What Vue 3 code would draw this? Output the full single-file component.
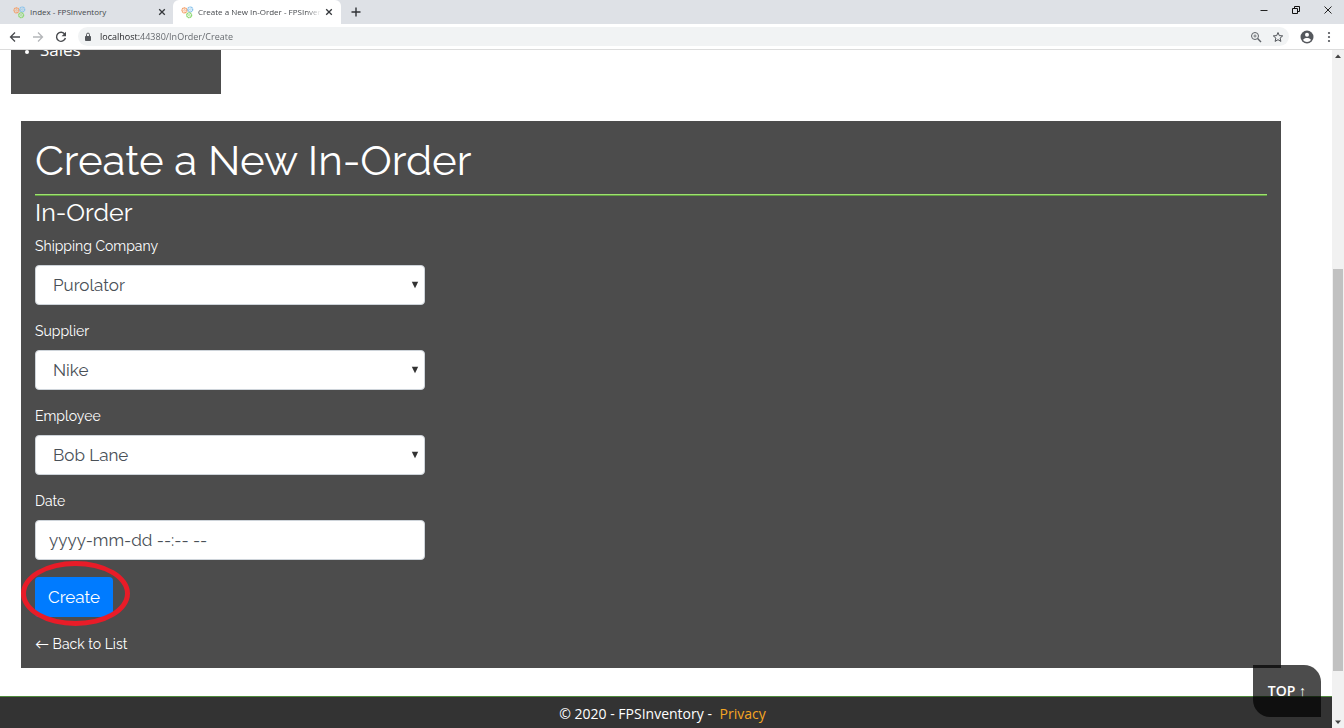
<script setup>
import { ref } from 'vue'

const tabs = ref([
  { title: 'Index - FPSInventory', active: false },
  { title: 'Create a New In-Order - FPSInventory', active: true },
])
const url = ref('localhost:44380/InOrder/Create')
const fields = ref([
  { id: 'shipping', label: 'Shipping Company', value: 'Purolator', options: ['Purolator'] },
  { id: 'supplier', label: 'Supplier', value: 'Nike', options: ['Nike'] },
  { id: 'employee', label: 'Employee', value: 'Bob Lane', options: ['Bob Lane'] },
])
const date = ref('')
</script>

<template>
  <div class="window">
    <header class="tabstrip">
      <div v-for="tab in tabs" :key="tab.title" class="tab" :class="{ active: tab.active }">
        <svg class="favicon" viewBox="0 0 24 24" fill="none" aria-hidden="true">
          <circle cx="6.500" cy="8" r="4.500" stroke="#f3a06a" stroke-width="2.600" stroke-dasharray="2.600 .6" />
          <circle cx="6.500" cy="8" r="1.500" stroke="#f3a673" stroke-width="1.300" />
          <circle cx="17" cy="6.500" r="4.500" stroke="#8cc4ec" stroke-width="2.600" stroke-dasharray="2.600 .6" />
          <circle cx="17" cy="6.500" r="1.500" stroke="#94c9ed" stroke-width="1.300" />
          <circle cx="15" cy="17" r="4.500" stroke="#8fd975" stroke-width="2.600" stroke-dasharray="2.600 .6" />
          <circle cx="15" cy="17" r="1.500" stroke="#9bdd83" stroke-width="1.300" />
        </svg>
        <button class="tab-title" type="button">{{ tab.title }}</button>
        <button class="tab-close" type="button" aria-label="Close tab">
          <svg viewBox="0 0 8 8"><path d="M1.200 1.200 6.800 6.800M6.800 1.200 1.200 6.800" stroke="#34373b" stroke-width="1.300" /></svg>
        </button>
      </div>
      <button class="new-tab" type="button" aria-label="New tab">
        <svg viewBox="0 0 10 10"><path d="M5 .5v9M.5 5h9" stroke="#303236" stroke-width="1.400" /></svg>
      </button>
      <div class="controls">
        <button type="button" aria-label="Minimize">
          <svg viewBox="0 0 10 10"><path d="M1.500 5.500h7" stroke="#222" /></svg>
        </button>
        <button type="button" aria-label="Restore">
          <svg viewBox="0 0 10 10" fill="none" stroke="#111"><path d="M1.500 3.500h5v5h-5zM3.500 3.500v-2h5v5h-2" /></svg>
        </button>
        <button type="button" aria-label="Close">
          <svg viewBox="0 0 10 10"><path d="M1.500 1.500l7 7M8.500 1.500l-7 7" stroke="#222" /></svg>
        </button>
      </div>
    </header>

    <nav class="toolbar">
      <button type="button" aria-label="Back">
        <svg viewBox="0 0 12 12" fill="none" stroke="#47494d" stroke-width="1.300"><path d="M11 6H1.500M6 1.500 1.500 6 6 10.500" /></svg>
      </button>
      <button type="button" aria-label="Forward">
        <svg viewBox="0 0 12 12" fill="none" stroke="#b4b6b9" stroke-width="1.300"><path d="M1 6h9.500M6 1.500 10.500 6 6 10.500" /></svg>
      </button>
      <button type="button" aria-label="Reload">
        <svg viewBox="0 0 12 12" fill="none" stroke="#47494d" stroke-width="1.400"><path d="M9.800 3.300A4.500 4.500 0 1 0 10.400 7" /><path d="M11 .8v4.400H6.600z" fill="#47494d" stroke="none" /></svg>
      </button>
      <div class="omnibox">
        <svg class="lock" viewBox="0 0 8 10"><path d="M1.500 4.500h5v4h-5z" fill="#55585c" stroke="#55585c" stroke-linejoin="round" /><path d="M2.500 4V2.600a1.500 1.500 0 0 1 3 0V4" fill="none" stroke="#55585c" /></svg>
        <input v-model="url" class="url" type="text" aria-label="Address" />
        <button type="button" aria-label="Zoom">
          <svg viewBox="0 0 12 12" fill="none" stroke="#5f6368"><circle cx="5" cy="5" r="3.500" /><path d="M7.600 7.600 11 11" stroke-width="1.400" /><path d="M5 3.400v3.200M3.400 5h3.200" stroke-width=".8" /></svg>
        </button>
        <button type="button" aria-label="Bookmark">
          <svg viewBox="0 0 12 12" fill="none" stroke="#505358"><path d="M6 1.500 7.300 4.600l3.400.3-2.600 2.200.8 3.300L6 8.700l-2.900 1.700.8-3.300L1.300 4.900l3.400-.3z" /></svg>
        </button>
      </div>
      <button class="profile" type="button" aria-label="Profile">
        <svg viewBox="0 0 14 14"><circle cx="7" cy="7" r="6.500" fill="#55585d" /><circle cx="7" cy="4.800" r="2" fill="#fff" /><path d="M3 10.100C3.400 8.600 5.500 8 7 8s3.600.6 4 2.100a5 5 0 0 1-8 0z" fill="#fff" /></svg>
      </button>
      <button class="more" type="button" aria-label="Menu">
        <svg viewBox="0 0 12 12" fill="#505358"><circle cx="6" cy="2" r="1.100" /><circle cx="6" cy="6" r="1.100" /><circle cx="6" cy="10" r="1.100" /></svg>
      </button>
    </nav>

    <div class="viewport">
      <div class="page">
        <aside class="side">
          <ul><li>Sales</li></ul>
        </aside>

        <main class="card">
          <h1>Create a New In-Order</h1>
          <hr />
          <h2>In-Order</h2>
          <form @submit.prevent>
            <div v-for="f in fields" :key="f.id" class="group">
              <label :for="f.id">{{ f.label }}</label>
              <div class="select">
                <select :id="f.id" v-model="f.value">
                  <option v-for="o in f.options" :key="o">{{ o }}</option>
                </select>
                <svg viewBox="0 0 8 8" aria-hidden="true"><path d="M.8.800h6.400L4 7.200z" fill="#333" /></svg>
              </div>
            </div>
            <div class="group">
              <label for="date">Date</label>
              <input id="date" v-model="date" type="text" placeholder="yyyy-mm-dd --:-- --" />
            </div>
            <div class="submit">
              <button type="submit">Create</button>
              <span class="ring"></span>
            </div>
          </form>
          <a class="back" href="#list">← Back to List</a>
        </main>

        <footer class="footer">© 2020 - FPSInventory - <a href="#privacy">Privacy</a></footer>
        <a class="top" href="#top">TOP <span class="arrow">↑</span></a>
      </div>

      <div class="scrollbar" aria-hidden="true">
        <svg viewBox="0 0 12 12"><path d="M3 8h6L6 4.500z" fill="#444" /></svg>
        <div class="track"><div class="thumb"></div></div>
        <svg viewBox="0 0 12 12"><path d="M3 4.500h6L6 8z" fill="#444" /></svg>
      </div>
    </div>
  </div>
</template>

<style>
body {
  margin: 0;
  overflow: hidden;
}
</style>

<style scoped>
* {
  box-sizing: border-box;
}
.window {
  height: 100vh;
  display: flex;
  flex-direction: column;
  background: #fff;
  font-family: "Open Sans", "Noto Sans", sans-serif;
}
button {
  border: 0;
  padding: 0;
  background: none;
  font: inherit;
  color: inherit;
}
svg {
  display: block;
  flex: none;
}

/* browser chrome */
.tabstrip {
  display: flex;
  align-items: center;
  height: 24px;
  flex: none;
  background: #dee1e6;
}
.tab {
  display: flex;
  align-items: center;
  width: 168px;
  height: 24px;
  padding: 0 8px;
  border-radius: 6px 6px 0 0;
  color: #45484c;
  font: 8px/12px "Open Sans", sans-serif;
}
.tab:first-child {
  width: 173px;
  padding: 0 7px 0 13px;
}
.tab.active {
  background: #fff;
}
.favicon {
  width: 13px;
  height: 13px;
}
.tab-title {
  flex: 1;
  min-width: 0;
  margin: 0 4px;
  overflow: hidden;
  white-space: nowrap;
  text-align: left;
}
.active .tab-title {
  mask-image: linear-gradient(to right, #000 88%, transparent);
}
.tab-close svg {
  width: 8px;
  height: 8px;
}
.new-tab {
  margin-left: 10px;
}
.new-tab svg {
  width: 10px;
  height: 10px;
}
.controls {
  display: flex;
  gap: 22px;
  margin-left: auto;
  padding: 0 11px 4px 0;
}
.controls svg {
  width: 10px;
  height: 10px;
}
.toolbar {
  display: flex;
  align-items: center;
  gap: 11px;
  height: 26px;
  flex: none;
  padding: 0 9px;
  border-bottom: 1px solid #dcdcdc;
}
.toolbar svg {
  width: 12px;
  height: 12px;
}
.omnibox {
  flex: 1;
  display: flex;
  align-items: center;
  gap: 10px;
  height: 19px;
  padding: 0 5px 0 6px;
  border-radius: 10px;
  background: #f1f3f4;
}
.omnibox .lock {
  width: 8px;
  height: 10px;
}
.url {
  flex: 1;
  min-width: 0;
  margin-left: -2px;
  padding: 0;
  border: 0;
  outline: 0;
  background: linear-gradient(to right, #202124 40px, #5f6368 40px);
  background-clip: text;
  color: transparent;
  font: 9px/16px "Open Sans", sans-serif;
}
.toolbar .profile svg {
  width: 14px;
  height: 14px;
}
.toolbar .more {
  margin-left: -2px;
}

/* page */
.viewport {
  flex: 1;
  min-height: 0;
  display: flex;
}
.page {
  position: relative;
  flex: 1;
  min-width: 0;
  overflow: hidden;
  display: flex;
  flex-direction: column;
}
.side {
  display: flex;
  flex: none;
  align-items: flex-end;
  width: 210px;
  height: 44px;
  margin-left: 11px;
  padding-bottom: 32px;
  overflow: hidden;
  background: #4c4c4c;
  color: #fff;
  font-size: 17px;
  line-height: 24px;
}
.side ul {
  margin: 0;
  padding-left: 29px;
}
.side li::marker {
  font-size: 12px;
}
.card {
  flex: none;
  margin: 27px 51px 28px 21px;
  padding: 14px 14px 12px;
  background: #4c4c4c;
  color: #fff;
  font-family: Raleway, Lato, sans-serif;
}
h1 {
  margin: 0;
  font-size: 42px;
  line-height: 52px;
  font-weight: 400;
}
hr {
  height: 2px;
  margin: 7px 0 0;
  border: 0;
  background: linear-gradient(#a0e070 50%, #5f9f40 50%);
}
h2 {
  margin: 0 0 6px;
  font-size: 25px;
  line-height: 32px;
  font-weight: 400;
}
.group {
  width: 390px;
  max-width: 100%;
  margin-bottom: 14px;
}
label {
  display: block;
  margin-bottom: 7px;
  font-size: 14px;
  line-height: 24px;
}
.select {
  display: grid;
  align-items: center;
}
.select select,
.select svg {
  grid-area: 1 / 1;
}
.select svg {
  justify-self: end;
  width: 8px;
  height: 8px;
  margin-right: 6px;
  pointer-events: none;
}
select,
#date {
  display: block;
  width: 100%;
  height: 40px;
  padding: 0 13px;
  border: 1px solid #ced4da;
  border-radius: 4px;
  background: #fff;
  color: #495057;
  font-family: inherit;
  font-size: 17px;
}
select {
  appearance: none;
  padding-left: 17px;
}
#date::placeholder {
  color: #495057;
  opacity: 1;
}
.submit {
  position: relative;
  width: fit-content;
  margin: 17px 0 15px;
}
.submit button {
  display: block;
  height: 40px;
  padding: 0 13px;
  border-radius: 4px;
  background: #007bff;
  font-size: 17px;
}
.ring {
  position: absolute;
  inset: -16px -17px -9px -14px;
  border: 5px solid #e81c28;
  border-radius: 50%;
  pointer-events: none;
}
.back {
  display: block;
  width: fit-content;
  color: #fff;
  font-size: 14px;
  line-height: 24px;
  text-decoration: none;
}
.footer {
  flex: 1 0 auto;
  padding-right: 7px;
  border-top: 1px solid #4f8a3c;
  background: #333;
  color: #fff;
  text-align: center;
  font-size: 14px;
  line-height: 34px;
}
.footer a {
  margin-left: 4px;
  color: #f5a623;
  text-decoration: none;
}
.top {
  position: absolute;
  right: 11px;
  bottom: 11px;
  padding: 0 15px;
  border-radius: 0 17px;
  background: rgba(0, 0, 0, 0.7);
  color: #fff;
  font-size: 14px;
  font-weight: 600;
  line-height: 52px;
  text-decoration: none;
}
.arrow {
  font-family: Raleway, "Liberation Sans", sans-serif;
  line-height: 1;
}
.scrollbar {
  display: flex;
  flex-direction: column;
  width: 12px;
  background: #f1f1f1;
}
.scrollbar svg {
  width: 12px;
  height: 12px;
}
.track {
  flex: 1;
  display: grid;
  grid-template-rows: 207fr 402fr 45fr;
  padding: 0 1px;
}
.thumb {
  grid-row: 2;
  background: #c1c1c1;
}
</style>
